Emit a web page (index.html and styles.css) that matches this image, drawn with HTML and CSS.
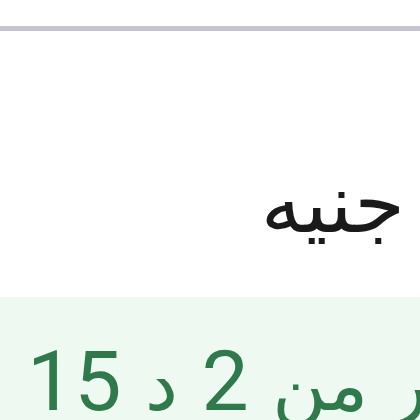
FILE: index.html
```html
<!DOCTYPE html>
<html lang="ar" dir="rtl">
<head>
<meta charset="utf-8">
<link rel="stylesheet" href="styles.css">
</head>
<body>
<div class="page">
  <div class="header"></div>
  <div class="divider"></div>
  <div class="price">
    <span class="currency">جنيه</span>
  </div>
  <div class="status">
    <span class="status-text" dir="rtl">أكثر من <span class="num">2</span> د <span class="num">15</span></span>
  </div>
</div>
</body>
</html>
```
FILE: styles.css
```css
html, body {
  margin: 0;
  padding: 0;
  background: #ffffff;
  overflow: hidden;
}
.page {
  width: 420px;
  height: 420px;
  display: flex;
  flex-direction: column;
  font-family: "DejaVu Sans", sans-serif;
}
.header {
  height: 26px;
}
.divider {
  height: 5px;
  background: #c8c3d2;
}
.price {
  height: 266px;
  display: flex;
  align-items: flex-start;
  justify-content: flex-start;
  padding-right: 15px;
  padding-top: 132px;
  box-sizing: border-box;
}
.currency {
  font-size: 82px;
  color: #1a1a1a;
  line-height: 82px;
}
.status {
  flex: 1;
  background: #edf9f1;
  display: flex;
  direction: ltr;
  align-items: flex-start;
  justify-content: flex-start;
  padding-left: 27px;
  overflow: hidden;
}
.status-text {
  font-size: 74px;
  color: #2f7a4a;
  white-space: nowrap;
  line-height: 86px;
  padding-top: 42px;
  flex-shrink: 0;
}
.num {
  font-family: "Roboto", sans-serif;
  font-size: 84px;
}
```
